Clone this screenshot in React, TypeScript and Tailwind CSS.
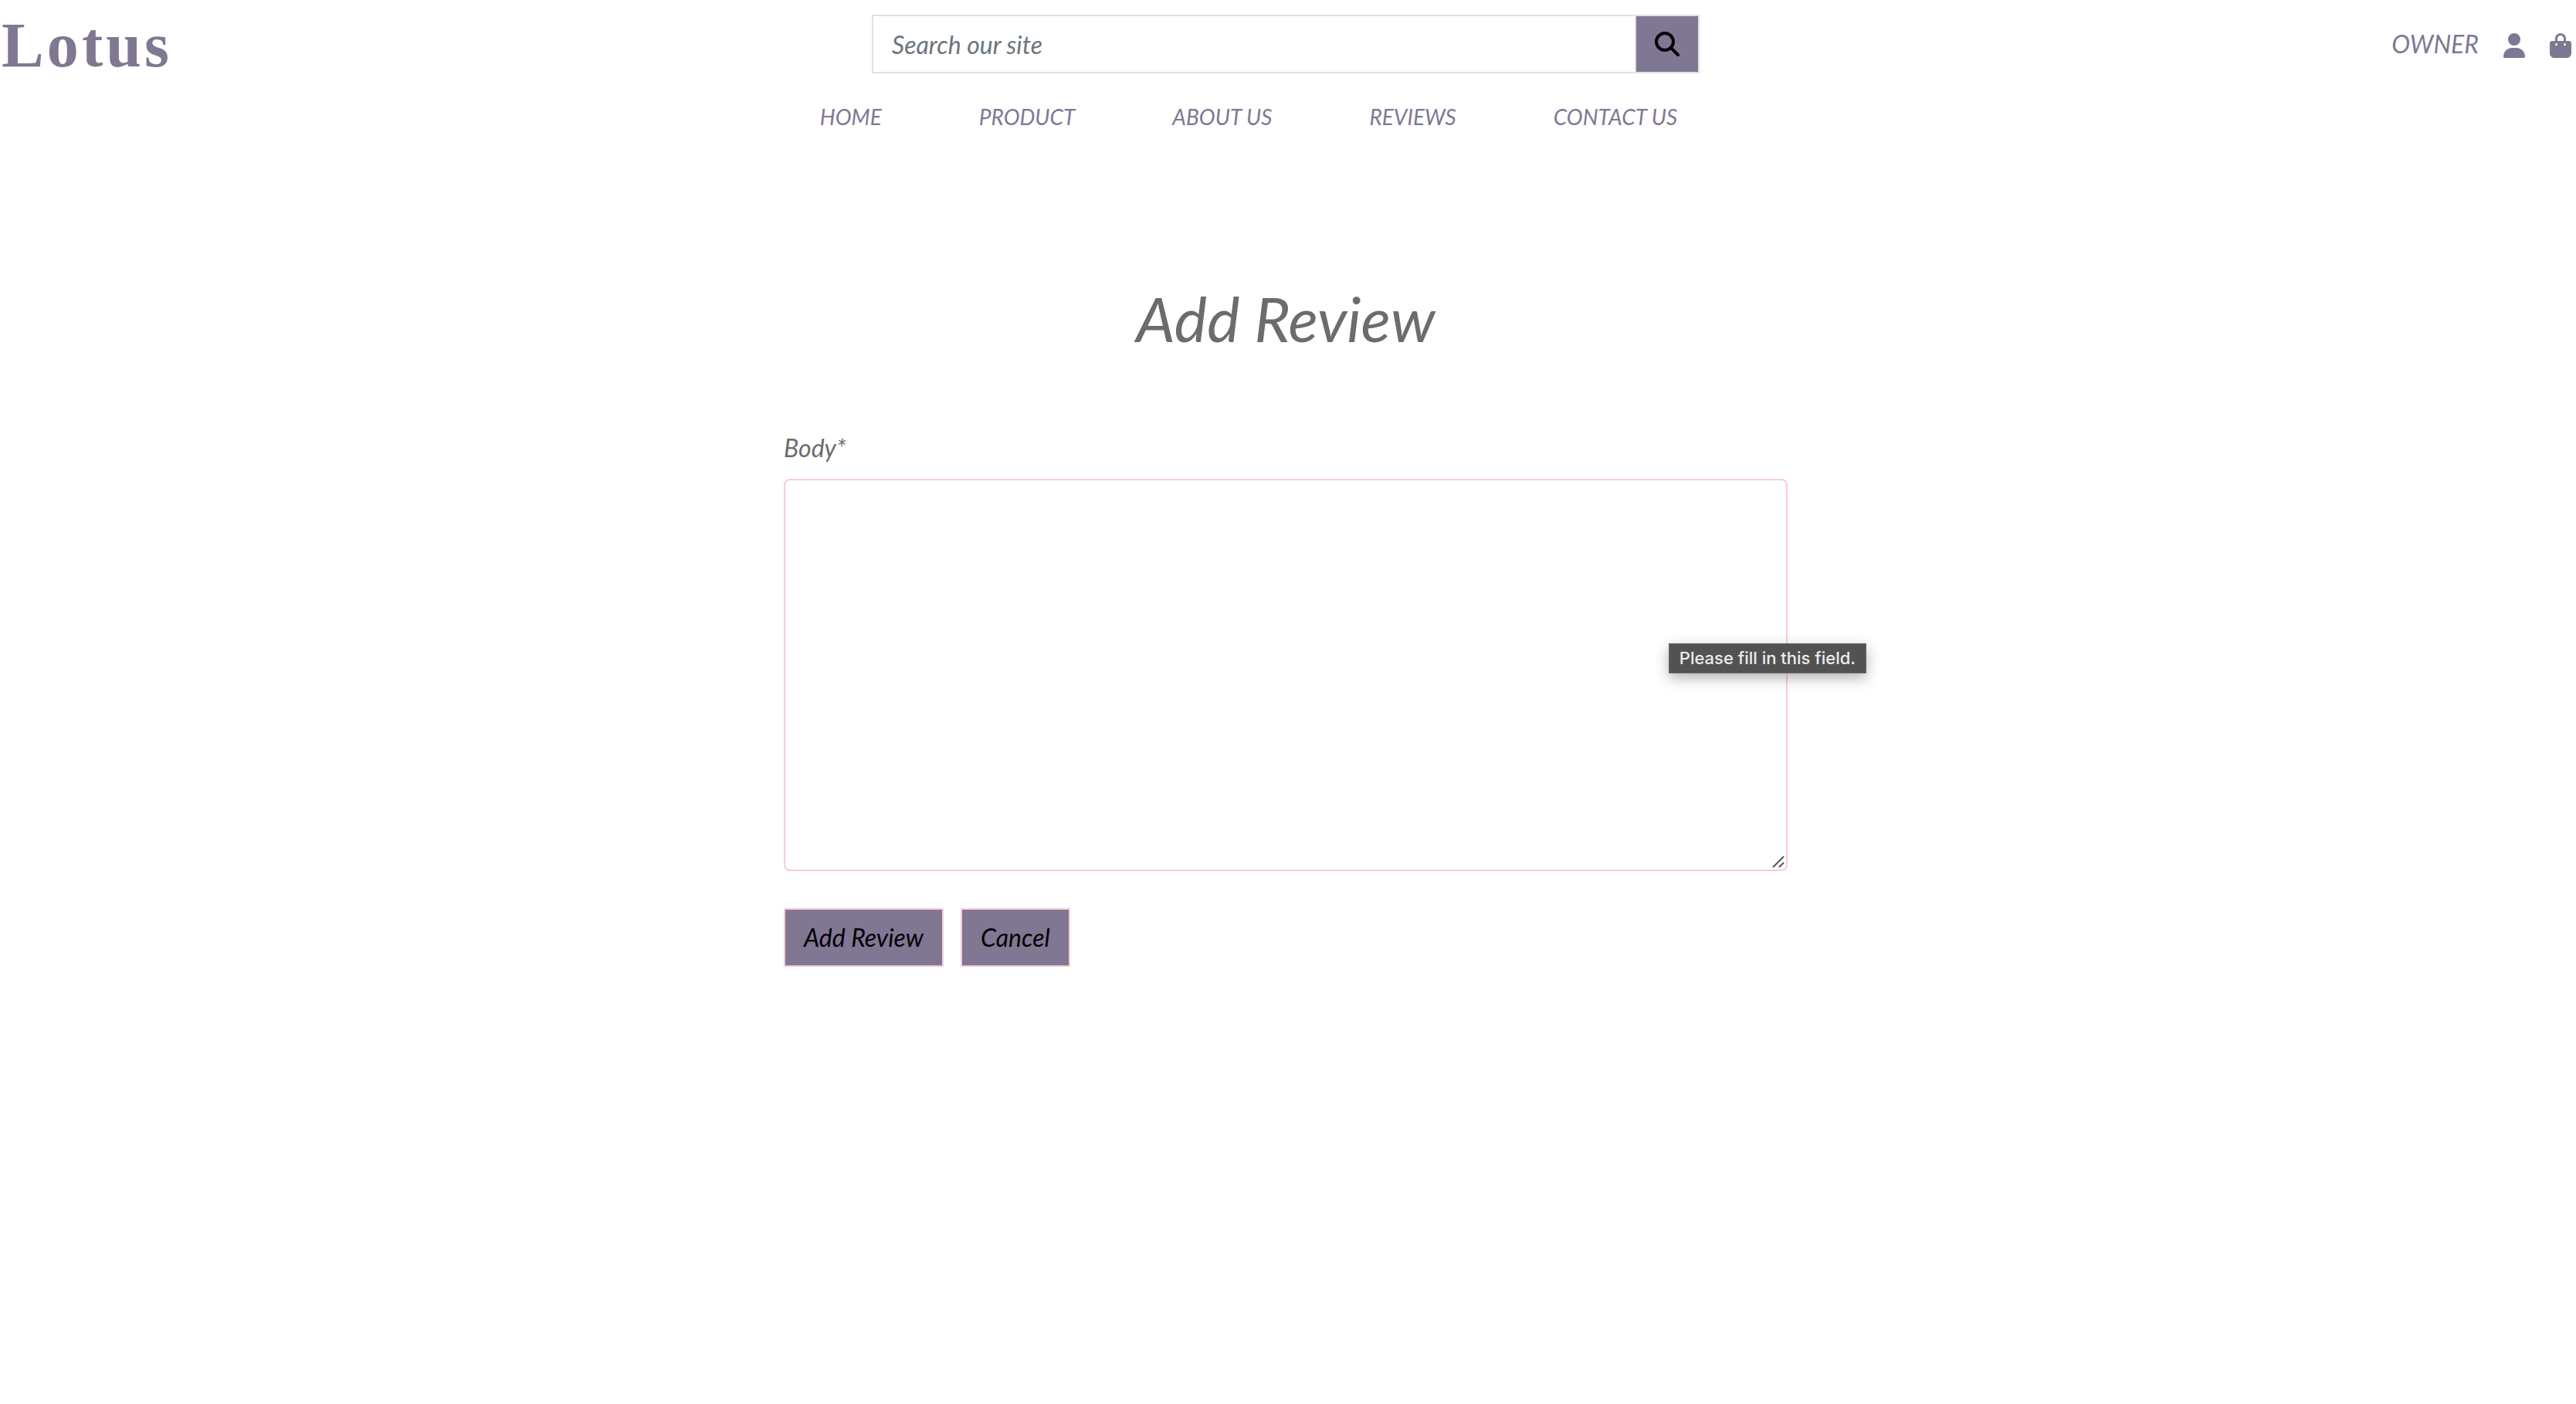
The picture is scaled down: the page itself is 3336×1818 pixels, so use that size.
import { FaBagShopping, FaMagnifyingGlass, FaUser } from "react-icons/fa6";

const links = ["HOME", "PRODUCT", "ABOUT US", "REVIEWS", "CONTACT US"];

function Header() {
  return (
    <header className="text-[#807793]">
      <div className="grid grid-cols-3 items-center pt-[19px]">
        <a
          href="#"
          className="pt-1 pl-0.5 font-['Liberation_Serif',serif] text-[82px] leading-[72px] font-bold tracking-wider not-italic"
        >
          Lotus
        </a>
        <form className="flex px-[19px]" role="search" onSubmit={(e) => e.preventDefault()}>
          <input
            type="search"
            aria-label="Search our site"
            placeholder="Search our site"
            className="h-[76px] min-w-0 flex-1 border-2 border-r-0 border-[#dee2e6] bg-white px-6 text-[32px] text-black italic outline-none placeholder:text-[#6c757d]"
          />
          <button
            type="submit"
            aria-label="Search"
            className="flex h-[76px] w-[84px] items-center justify-center border-2 border-[#dee2e6] bg-[#807793] text-black"
          >
            <FaMagnifyingGlass className="size-8" />
          </button>
        </form>
        <div className="flex items-center justify-end">
          <a href="#" className="text-[32px] leading-[48px]">
            OWNER
          </a>
          <a href="#" aria-label="Account" className="ml-8 pt-1">
            <FaUser className="h-8 w-7" />
          </a>
          <a href="#" aria-label="Shopping bag" className="ml-8 pt-1">
            <FaBagShopping className="h-8 w-7" />
          </a>
        </div>
      </div>
      <nav className="mt-[34px] flex justify-center gap-[126px] pr-24 text-[28px] leading-[44px]">
        {links.map((link) => (
          <a key={link} href="#">
            {link}
          </a>
        ))}
      </nav>
    </header>
  );
}

export default function App() {
  return (
    <div className="min-h-screen bg-white pr-1.5 font-['Lato',sans-serif] text-[32px] text-[#6c6c6c] italic">
      <Header />
      <main className="mx-auto max-w-[1300px] pt-[191px]">
        <h1 className="text-center text-[80px] leading-[96px]">Add Review</h1>
        <form className="mt-24" onSubmit={(e) => e.preventDefault()}>
          <label htmlFor="body" className="block leading-[48px]">
            Body*
          </label>
          <div className="relative mt-4">
            <textarea
              id="body"
              required
              className="block h-[508px] w-full resize-none rounded-lg border-2 border-[#fbccd4] bg-white px-6 py-3 outline-none"
            />
            <svg
              aria-hidden="true"
              viewBox="0 0 16 16"
              className="pointer-events-none absolute right-1 bottom-1 size-4"
              fill="none"
              stroke="#555"
              strokeWidth="2"
            >
              <path d="M1 15 15 1M9 15 15 9" />
            </svg>
            <div
              role="tooltip"
              className="absolute top-[213px] -right-[102px] border border-[#6c6c6c] bg-[#525252] px-[13px] font-['Inter',sans-serif] text-[22px] leading-[37px] font-medium whitespace-nowrap text-[#ececec] not-italic shadow-[0_6px_18px_rgba(0,0,0,0.3)]"
            >
              Please fill in this field.
            </div>
          </div>
          <div className="mt-12 flex gap-[22px] text-black">
            <button type="submit" className="h-[76px] border-2 border-[#fbccd4] bg-[#807793] px-6 leading-[48px] italic">
              Add Review
            </button>
            <button type="button" className="h-[76px] border-2 border-[#fbccd4] bg-[#807793] px-6 leading-[48px] italic">
              Cancel
            </button>
          </div>
        </form>
      </main>
    </div>
  );
}
